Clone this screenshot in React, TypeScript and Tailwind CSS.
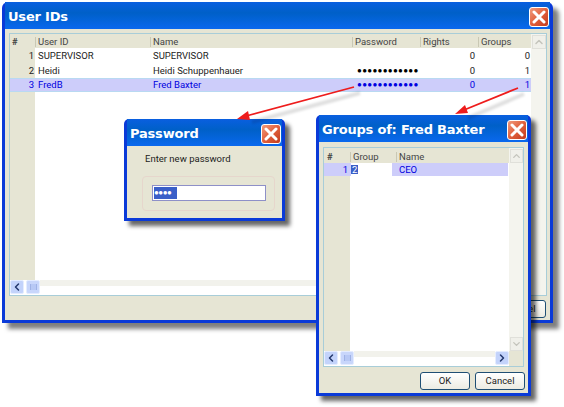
import { ChevronDown, ChevronLeft, ChevronRight, ChevronUp } from "lucide-react"

const font = "font-['Roboto',Arial,sans-serif] text-[9.5px] leading-none text-[#222]"

function CloseButton() {
  return (
    <div className="w-[20px] h-[20px] rounded-[3px] border border-white bg-gradient-to-br from-[#f09a7c] via-[#e0603c] to-[#c23a1c] flex items-center justify-center">
      <svg width="14" height="14" viewBox="0 0 14 14">
        <path d="M2 2 L12 12 M12 2 L2 12" stroke="white" strokeWidth="3" strokeLinecap="round" />
      </svg>
    </div>
  )
}

function TitleBar({ title }: { title: string }) {
  return (
    <div className="h-[27px] shrink-0 pt-[2px] pl-[3px] pr-[1px] flex items-center justify-between bg-gradient-to-b from-[#0a5fe0] via-[#0060c8] via-40% to-[#0a68ee]">
      <span className="font-['DejaVu_Sans',sans-serif] font-bold text-[13px] tracking-[-0.2px] leading-none text-white">{title}</span>
      <CloseButton />
    </div>
  )
}

function ScrollButton({ children, className = "" }: { children: React.ReactNode; className?: string }) {
  return (
    <div className={"w-[14px] h-[14px] shrink-0 rounded-[2px] flex items-center justify-center bg-[#c3d3fb] border border-[#e4ecff] text-[#24386e] " + className}>
      {children}
    </div>
  )
}

function Thumb() {
  return (
    <div className="ml-[2px] w-[14px] h-[14px] shrink-0 rounded-[2px] bg-[#c8d6fb] border border-[#e4ecff] flex items-center justify-center">
      <div className="w-[7px] h-[6px] border-x border-[#9fb2e6] bg-[#b7c8f5]" />
    </div>
  )
}

function HeaderCell({ label, className }: { label: string; className: string }) {
  return <div className={"h-[10px] flex items-center border-l border-[#c9c8b4] pl-[2px] text-[#444] " + className}>{label}</div>
}

function PushButton({ label }: { label: string }) {
  return (
    <div className="w-[50px] h-[18px] rounded-[3px] border border-[#1f4f74] bg-gradient-to-b from-white to-[#ecebe2] flex items-center justify-center text-[#222]">
      {label}
    </div>
  )
}

export default function App() {
  return (
    <div className={"relative w-[564px] h-[407px] bg-white overflow-hidden " + font}>
      {/* main window */}
      <div className="absolute left-[2px] top-[2px] w-[551px] h-[321px] flex flex-col rounded-t-[6px] border-x-[3px] border-b-[3px] border-[#0a3ad8] bg-[#e6e5d4] shadow-[6px_6px_4px_rgba(0,0,0,0.5)]">
        <TitleBar title="User IDs" />
        <div className="mx-[4px] mt-[4px] w-[538px] h-[263px] shrink-0 flex border border-[#a8cdd8] bg-white">
          <div className="w-[521px] flex flex-col">
            <div className="h-[14px] pt-[2px] flex items-center bg-[#e6e5d4]">
              <div className="w-[25px] pl-[2px] font-bold text-[#444]">#</div>
              <HeaderCell label="User ID" className="w-[115px]" />
              <HeaderCell label="Name" className="w-[202px]" />
              <HeaderCell label="Password" className="w-[68px]" />
              <HeaderCell label="Rights" className="w-[58px]" />
              <HeaderCell label="Groups" className="w-[53px]" />
            </div>
            <div className="flex-1 flex">
              <div className="w-[25px] flex flex-col bg-[#e6e5d4]">
                <div className="h-[15px] flex items-center justify-end pr-[1px]">1</div>
                <div className="h-[15px] flex items-center justify-end pr-[1px]">2</div>
                <div className="h-[14px] flex items-center justify-end pr-[1px] bg-[#cdcdfa] border-y border-[#b9d9f2] text-[#0000e0]">3</div>
              </div>
              <div className="flex-1 flex flex-col">
                <div className="h-[15px] flex items-center">
                  <div className="w-[115px] pl-[3px]">SUPERVISOR</div>
                  <div className="w-[202px] pl-[3px]">SUPERVISOR</div>
                  <div className="w-[68px]" />
                  <div className="w-[58px] pr-[3px] text-right">0</div>
                  <div className="w-[53px] pr-[1px] text-right">0</div>
                </div>
                <div className="h-[15px] flex items-center">
                  <div className="w-[115px] pl-[3px]">Heidi</div>
                  <div className="w-[202px] pl-[3px]">Heidi Schuppenhauer</div>
                  <div className="w-[68px] pl-[5px] overflow-hidden whitespace-nowrap text-[8px] tracking-[0.3px] text-black">●●●●●●●●●●●●</div>
                  <div className="w-[58px] pr-[3px] text-right">0</div>
                  <div className="w-[53px] pr-[1px] text-right">1</div>
                </div>
                <div className="h-[14px] flex items-center bg-[#cdcdfa] border-y border-[#b9d9f2] text-[#0000e0]">
                  <div className="w-[115px] pl-[3px]">FredB</div>
                  <div className="w-[202px] pl-[3px]">Fred Baxter</div>
                  <div className="w-[68px] pl-[5px] overflow-hidden whitespace-nowrap text-[8px] tracking-[0.3px]">●●●●●●●●●●●●</div>
                  <div className="w-[58px] pr-[3px] text-right">0</div>
                  <div className="w-[53px] pr-[1px] text-right">1</div>
                </div>
              </div>
            </div>
            <div className="h-[15px] flex bg-white">
              <ScrollButton><ChevronLeft size={12} strokeWidth={3} /></ScrollButton>
              <Thumb />
              <div className="flex-1 h-[6px] bg-[#f2f2ec]" />
            </div>
          </div>
          <div className="flex-1 flex flex-col items-center bg-[#f4f4ee]">
            <div className="w-[14px] h-[14px] mt-[1px] bg-[#f0f0ea] border border-[#e0e0da] flex items-center justify-center text-[#c4c4bc]">
              <ChevronUp size={12} strokeWidth={3} />
            </div>
          </div>
        </div>
        <div className="mt-[4px] pr-[4px] flex justify-end gap-[5px]">
          <PushButton label="OK" />
          <PushButton label="Cancel" />
        </div>
      </div>

      {/* password dialog */}
      <div className="absolute left-[124px] top-[119px] w-[161px] h-[102px] flex flex-col rounded-t-[5px] border-x-[3px] border-b-[3px] border-[#0a3ad8] bg-[#e6e5d4] shadow-[5px_5px_4px_rgba(0,0,0,0.6)]">
        <TitleBar title="Password" />
        <div className="pl-[18px] pt-[8px] text-[#222]">Enter new password</div>
        <div className="ml-[15px] mt-[12px] w-[133px] h-[35px] rounded-[4px] border border-[#e6d6cc] flex items-center pl-[9px]">
          <div className="w-[114px] h-[16px] border border-[#8e90c8] bg-white p-[1px] flex">
            <span className="w-[23px] h-full bg-[#3a5fc8] text-white text-[8px] flex items-center tracking-[-0.5px]">●●●●</span>
          </div>
        </div>
      </div>

      {/* groups dialog */}
      <div className="absolute left-[316px] top-[115px] w-[215px] h-[281px] flex flex-col rounded-t-[5px] border-x-[3px] border-b-[3px] border-[#0a3ad8] bg-[#e6e5d4] shadow-[5px_5px_4px_rgba(0,0,0,0.6)]">
        <TitleBar title="Groups of: Fred Baxter" />
        <div className="mx-[4px] mt-[5px] w-[201px] h-[220px] shrink-0 flex border border-[#a8cdd8] bg-white">
          <div className="w-[185px] flex flex-col">
            <div className="h-[15px] pt-[2px] flex items-center bg-[#e6e5d4]">
              <div className="w-[26px] pl-[3px] font-bold text-[#444]">#</div>
              <HeaderCell label="Group" className="w-[46px]" />
              <HeaderCell label="Name" className="flex-1" />
            </div>
            <div className="flex-1 flex">
              <div className="w-[26px] bg-[#e6e5d4]">
                <div className="h-[13px] flex items-center justify-end pr-[2px] bg-[#cdcdfa] text-[#0000e0]">1</div>
              </div>
              <div className="flex-1">
                <div className="h-[13px] mr-[1px] flex items-center bg-[#cdcdfa] text-[#0000e0]">
                  <div className="ml-[1px] w-[41px] h-full bg-white flex items-center">
                    <span className="bg-[#3a5fc8] text-white px-[1px]">2</span>
                  </div>
                  <div className="ml-[7px]">CEO</div>
                </div>
              </div>
            </div>
            <div className="h-[15px] flex bg-white">
              <ScrollButton><ChevronLeft size={12} strokeWidth={3} /></ScrollButton>
              <Thumb />
              <div className="flex-1 h-[6px] bg-[#f2f2ec]" />
              <ScrollButton><ChevronRight size={12} strokeWidth={3} /></ScrollButton>
            </div>
          </div>
          <div className="flex-1 flex flex-col items-center bg-[#f4f4ee]">
            <div className="w-[13px] h-[14px] mt-[1px] bg-[#f0f0ea] border border-[#e0e0da] flex items-center justify-center text-[#c4c4bc]">
              <ChevronUp size={12} strokeWidth={3} />
            </div>
            <div className="flex-1" />
            <div className="w-[13px] h-[14px] bg-[#f0f0ea] border border-[#e0e0da] flex items-center justify-center text-[#c4c4bc]">
              <ChevronDown size={12} strokeWidth={3} />
            </div>
            <div className="h-[15px] w-full bg-[#e6e5d4]" />
          </div>
        </div>
        <div className="mt-[5px] pr-[3px] flex justify-end gap-[5px]">
          <PushButton label="OK" />
          <PushButton label="Cancel" />
        </div>
      </div>

      {/* arrows */}
      <svg className="absolute left-0 top-0" width="564" height="407" viewBox="0 0 564 407">
        <path d="M360 93 L252 122" stroke="rgba(0,0,0,0.12)" strokeWidth="4" fill="none" className="blur-[1px]" />
        <path d="M524 94 L468 118" stroke="rgba(0,0,0,0.12)" strokeWidth="4" fill="none" className="blur-[1px]" />
        <path d="M354 87 L246 116" stroke="#ee1c1c" strokeWidth="1.8" fill="none" />
        <path d="M518 88 L464 110" stroke="#ee1c1c" strokeWidth="1.8" fill="none" />
        <path d="M237 119 L248 111 L250 120 Z" fill="#ee1c1c" />
        <path d="M455 114 L465 105 L468 113 Z" fill="#ee1c1c" />
      </svg>
    </div>
  )
}
